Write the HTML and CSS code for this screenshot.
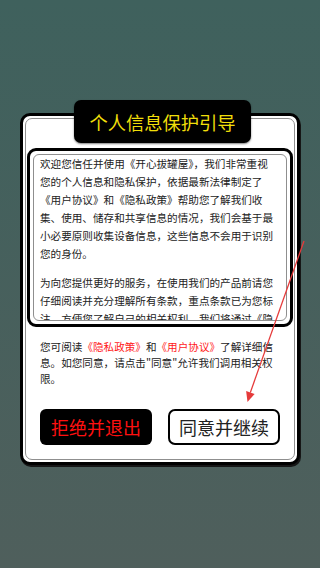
FILE: index.html
```html
<!DOCTYPE html>
<html lang="zh-CN">
<head>
<meta charset="utf-8">
<title>个人信息保护引导</title>
<link rel="stylesheet" href="styles.css">
</head>
<body>
<div class="page">
  <div class="card">
    <div class="title">个人信息保护引导</div>
    <div class="card-in">
      <div class="box">
        <div class="box-in">
          <p>欢迎您信任并使用《开心拔罐屋》，我们非常重视<br>您的个人信息和隐私保护，依据最新法律制定了<br>《用户协议》和《隐私政策》帮助您了解我们收<br>集、使用、储存和共享信息的情况，我们会基于最<br>小必要原则收集设备信息，这些信息不会用于识别<br>您的身份。</p>
          <p>为向您提供更好的服务，在使用我们的产品前请您<br>仔细阅读并充分理解所有条款，重点条款已为您标<br>注，方便您了解自己的相关权利。我们将通过《隐<br>私政策》和《用户协议》向您说明我们如何收集、<br>使用、储存和保护您的个人信息。</p>
        </div>
      </div>
      <p class="consent">您可阅读<span class="red">《隐私政策》</span>和<span class="red">《用户协议》</span>了解详细信<br>息。如您同意，请点击"同意"允许我们调用相关权<br>限。</p>
      <div class="actions">
        <button class="btn btn-reject">拒绝并退出</button>
        <button class="btn btn-agree">同意并继续</button>
      </div>
    </div>
  </div>
  <svg class="arrow" width="320" height="568" viewBox="0 0 320 568">
    <line x1="304" y1="241" x2="250.3" y2="392.6" stroke="#e53a3a" stroke-width="1.3"/>
    <polygon points="247.5,402 246.1,391.1 254.6,394.1" fill="#e53a3a"/>
  </svg>
</div>
</body>
</html>
```
FILE: styles.css
```css
html, body {
  margin: 0;
  padding: 0;
}
body {
  background: linear-gradient(#3f615d, #4f5f5c);
  min-height: 568px;
  font-family: "Noto Sans CJK SC", "Noto Sans", sans-serif;
}
.page {
  position: relative;
  min-height: 568px;
  box-sizing: border-box;
  padding: 113px 0 0 20px;
}
.card {
  position: relative;
  width: 280px;
  box-sizing: border-box;
  border: 3px solid #000;
  border-radius: 10px;
  background: #fff;
  padding: 2px;
  box-shadow: 1px 2px 0 #161616;
}
.title {
  position: absolute;
  left: 51px;
  top: -16px;
  width: 177px;
  height: 43px;
  display: flex;
  align-items: center;
  justify-content: center;
  background: #000;
  border-radius: 7px;
  color: #f0df0a;
  font-size: 18.3px;
  box-shadow: 0 1px 2px rgba(0,0,0,0.5);
}
.card-in {
  border: 1px solid #8f8f8f;
  border-radius: 7px;
  padding: 29px 1px 14px;
}
.box {
  height: 179px;
  box-sizing: border-box;
  border: 3px solid #000;
  border-radius: 9px;
  padding: 3px;
}
.box-in {
  height: 100%;
  box-sizing: border-box;
  border: 1px solid #8f8f8f;
  border-radius: 6px;
  overflow: hidden;
  padding: 0 3px 0 6px;
}
.box-in p {
  margin: 0 0 11px;
  font-size: 10.6px;
  line-height: 18px;
  color: #222;
  white-space: nowrap;
}
.consent {
  margin: 12px 0 0 13px;
  font-size: 10.6px;
  line-height: 16px;
  color: #222;
  white-space: nowrap;
}
.red {
  color: #ff1a1a;
}
.actions {
  display: flex;
  justify-content: center;
  gap: 16px;
  margin-top: 21.5px;
}
.btn {
  width: 112px;
  height: 36px;
  box-sizing: border-box;
  padding: 0;
  font-family: "Noto Sans CJK SC", sans-serif;
  font-size: 18px;
  line-height: 1;
}
.btn-reject {
  background: #000;
  color: #ff1010;
  border: 0;
  border-radius: 6px;
}
.btn-agree {
  background: #fff;
  color: #222;
  border: 2px solid #000;
  border-radius: 7px;
}
.arrow {
  position: absolute;
  left: 0;
  top: 0;
  pointer-events: none;
}
```
